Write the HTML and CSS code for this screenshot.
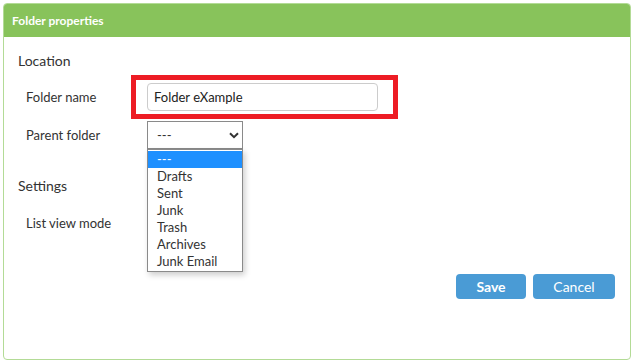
FILE: index.html
```html
<!DOCTYPE html>
<html lang="en">

<head>
    <meta charset="UTF-8">
    <title>Folder properties</title>
    <link rel="stylesheet" href="styles.css">
</head>

<body>
    <div class="panel">
        <div class="panel-header">Folder properties</div>

        <div class="panel-body">
            <div class="section-title">Location</div>

            <div class="form-row">
                <label class="row-label">Folder name</label>
                <div class="field">
                    <input type="text" class="text-input" value="Folder eXample">
                    <div class="highlight"></div>
                </div>
            </div>

            <div class="form-row">
                <label class="row-label">Parent folder</label>
                <div class="field">
                    <div class="fake-select">
                        <span>---</span>
                        <svg class="chevron" width="10" height="7" viewBox="0 0 10 7">
                            <path d="M1 1.2 L5 5.2 L9 1.2" fill="none" stroke="#333" stroke-width="2"/>
                        </svg>
                    </div>
                    <ul class="dropdown">
                        <li class="selected">---</li>
                        <li>Drafts</li>
                        <li>Sent</li>
                        <li>Junk</li>
                        <li>Trash</li>
                        <li>Archives</li>
                        <li>Junk Email</li>
                    </ul>
                </div>
            </div>

            <div class="section-title settings">Settings</div>

            <div class="form-row">
                <label class="row-label">List view mode</label>
                <div class="field"></div>
            </div>

            <div class="actions">
                <button class="btn btn-save">Save</button>
                <button class="btn">Cancel</button>
            </div>
        </div>
    </div>
</body>

</html>
```

FILE: styles.css
```css
body {
    margin: 0;
    background: #fff;
    font-family: Lato, 'Liberation Sans', sans-serif;
    color: #333;
}

.panel {
    margin: 3px;
    width: 626px;
    height: 355px;
    border: 1px solid #b3db96;
    border-radius: 4px;
    overflow: visible;
}

.panel-header {
    background-color: #88c35b;
    height: 33px;
    line-height: 33px;
    padding-left: 8px;
    color: #fff;
    font-size: 12px;
    font-weight: bold;
    border-radius: 3px 3px 0 0;
}

.panel-body {
    padding: 14px 15px 0 14px;
}

.section-title {
    font-size: 14px;
    line-height: 20px;
    margin-bottom: 7px;
}

.section-title.settings {
    margin-top: 22px;
    margin-bottom: 8px;
}

.form-row {
    display: flex;
    align-items: center;
    height: 38px;
    padding-left: 8px;
}

.row-label {
    width: 121px;
    font-size: 13px;
}

.field {
    position: relative;
}

.text-input {
    box-sizing: border-box;
    width: 231px;
    height: 28px;
    padding: 0 6px;
    border: 1px solid #ccc;
    border-radius: 4px;
    font-family: Lato, 'Liberation Sans', sans-serif;
    font-size: 13px;
    color: #222;
    outline: none;
}

/* red annotation frame round the folder name input */
.highlight {
    position: absolute;
    left: -16px;
    top: -8px;
    width: 257px;
    height: 34px;
    border: 5px solid #ed1c24;
}

.fake-select {
    box-sizing: border-box;
    width: 96px;
    height: 28px;
    border: 1px solid #8a8a8a;
    display: flex;
    align-items: center;
    justify-content: space-between;
    padding: 0 3px 0 9px;
    font-size: 13px;
}

.dropdown {
    position: absolute;
    left: 0;
    top: 28px;
    width: 94px;
    margin: 0;
    padding: 1px 0;
    list-style: none;
    background: #fff;
    border: 1px solid #8a8a8a;
    box-shadow: 2px 3px 6px rgba(0, 0, 0, 0.2);
    z-index: 2;
}

.dropdown li {
    height: 17px;
    line-height: 17px;
    padding-left: 9px;
    font-size: 13px;
    color: #333;
}

.dropdown li.selected {
    background-color: #1e90ff;
    color: #fff;
}

.actions {
    display: flex;
    justify-content: flex-end;
    gap: 7px;
    margin-top: 32px;
}

.btn {
    height: 25px;
    width: 82px;
    border: none;
    border-radius: 4px;
    background-color: #4a9bd5;
    color: #fff;
    font-family: Lato, 'Liberation Sans', sans-serif;
    font-size: 14px;
}

.btn-save {
    width: 70px;
    font-weight: bold;
}
```
